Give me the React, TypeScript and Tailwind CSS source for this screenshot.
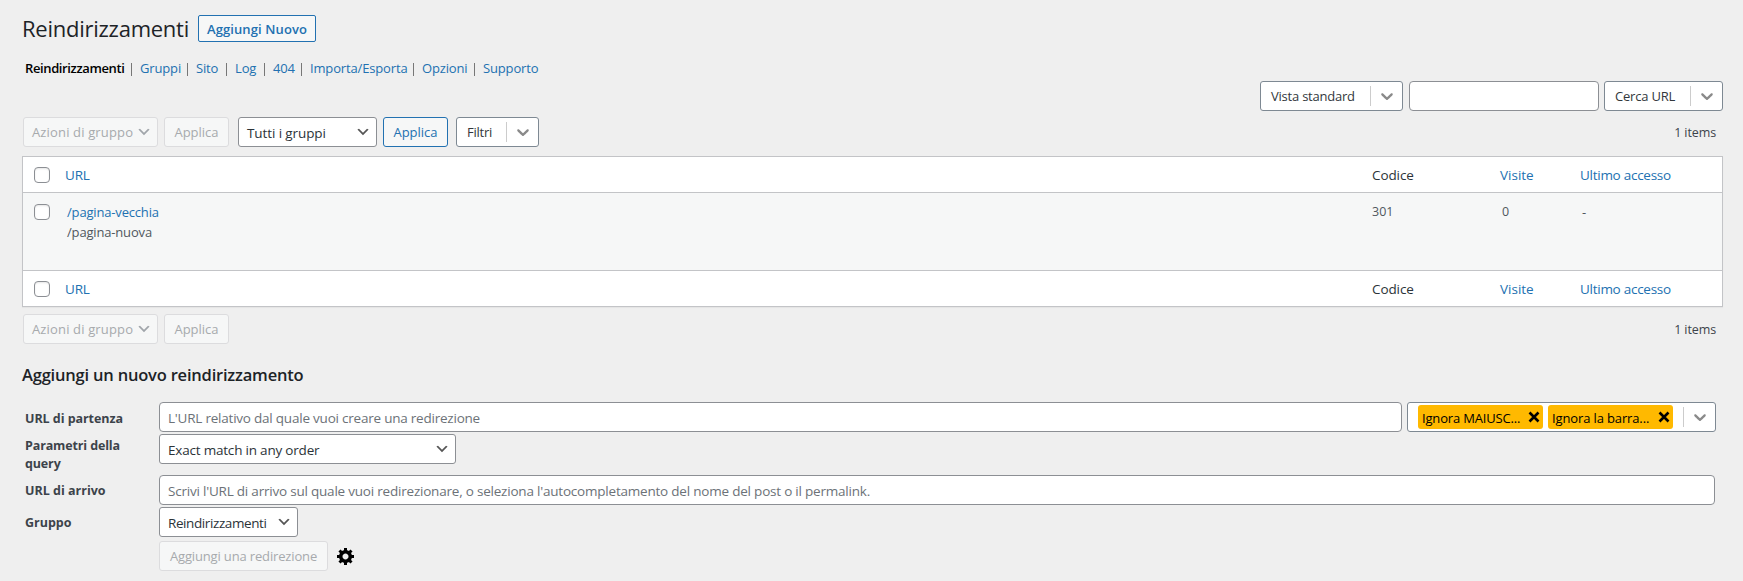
import React from 'react';
import clsx from 'clsx';

const NAV = [
    { label: 'Gruppi', className: 'w-[47px]' },
    { label: 'Sito', className: 'w-[30px]' },
    { label: 'Log', className: 'w-[29px]' },
    { label: '404', className: 'w-[28px]' },
    { label: 'Importa/Esporta', className: 'w-[103px]' },
    { label: 'Opzioni', className: 'w-[52px]' },
    { label: 'Supporto', className: '' },
];

const Chevron: React.FC<{ className?: string }> = ({ className }) => (
    <svg viewBox="0 0 20 20" className={clsx('h-4 w-4 shrink-0', className)} fill="currentColor">
        <path d="M5 6l5 5 5-5 2 1-7 7-7-7 2-1z" />
    </svg>
);

// Native looking select
const Select: React.FC<{ label: string; className: string; textClass?: string; disabled?: boolean }> = ({ label, className, textClass, disabled }) => (
    <button
        className={clsx(
            'flex h-[30px] items-center justify-between rounded-[3px] border pl-2 pr-[5px]',
            disabled ? 'border-[#dcdcde] bg-[#f6f7f7] text-[#a7aaad]' : 'border-[#8c8f94] bg-white text-[#2c3338]',
            className
        )}
    >
        <span className={clsx('whitespace-nowrap pt-[2px]', textClass)}>{label}</span>
        <Chevron className={disabled ? 'text-[#a0a5aa]' : 'text-[#555]'} />
    </button>
);

const Indicator = () => (
    <span className="flex h-full items-center">
        <span className="h-5 w-px bg-[#ccc]" />
        <span className="flex w-[31px] justify-center text-[#8a8a8a]">
            <svg viewBox="0 0 20 20" className="h-5 w-5" fill="currentColor">
                <path d="M4.516 7.548c0.436-0.446 1.043-0.481 1.576 0l3.908 3.747 3.908-3.747c0.533-0.481 1.141-0.446 1.574 0 0.436 0.445 0.408 1.197 0 1.615-0.406 0.418-4.695 4.502-4.695 4.502-0.217 0.223-0.502 0.335-0.787 0.335s-0.57-0.112-0.789-0.335c0 0-4.287-4.084-4.695-4.502s-0.436-1.17 0-1.615z" />
            </svg>
        </span>
    </span>
);

const DropButton: React.FC<{ label: string; className: string; textClass?: string }> = ({ label, className, textClass }) => (
    <button className={clsx('flex h-[30px] items-center justify-between rounded-[3px] border border-[#7e8993] bg-white pl-[10px] text-[13px] text-[#32373c]', className)}>
        <span className={clsx('whitespace-nowrap pt-[2px]', textClass)}>{label}</span>
        <Indicator />
    </button>
);

const Apply: React.FC<{ className: string }> = ({ className }) => (
    <button className={clsx('h-[30px] w-[65px] rounded-[3px] border bg-[#f6f7f7] pt-[2px] text-center text-[13px]', className)}>Applica</button>
);

const BulkActions = () => (
    <>
        <Select label="Azioni di gruppo" disabled className="ml-px w-[135px] text-[13px]" textClass="tracking-[0.15px]" />
        <Apply className="ml-[6px] border-[#dcdcde] text-[#a7aaad]" />
    </>
);

const Count = () => <span className="ml-auto mr-[7px] pt-[3px] text-[12.5px] tracking-[-0.1px] text-[#3c434a]">1 items</span>;

const Checkbox = () => <span className="block h-4 w-4 rounded-[4px] border border-[#8c8f94] bg-white shadow-[inset_0_1px_2px_rgba(0,0,0,0.1)]" />;

const COLS = 'grid grid-cols-[42px_1307px_128px_80px_1fr]';

const HeaderRow = () => (
    <div className={clsx(COLS, 'h-[35px] items-center bg-white text-[13.5px] text-[#2271b1]')}>
        <div className="pl-[11px] pt-px"><Checkbox /></div>
        <div className="pt-[2px] tracking-[-0.2px]">URL</div>
        <div className="pt-[2px] tracking-[-0.1px] text-[#2c3338]">Codice</div>
        <div className="pt-[2px]">Visite</div>
        <div className="pt-[2px] tracking-[-0.27px]">Ultimo accesso</div>
    </div>
);

const Label: React.FC<{ children: React.ReactNode; className?: string }> = ({ children, className }) => (
    <div className={clsx('w-[137px] shrink-0 pl-[3px] pr-6 text-[12.5px] font-bold leading-[18px] text-[#3c434a]', className)}>{children}</div>
);

const Tag: React.FC<{ label: string; className: string }> = ({ label, className }) => (
    <span className="flex h-6 w-[125px] items-center justify-between rounded-[3px] bg-[#ffb900] pl-[4px] pr-[3px] text-black">
        <span className={clsx('whitespace-nowrap pt-[3px] text-[13px]', className)}>{label}</span>
        <svg viewBox="0 0 12 12" className="h-3 w-3" stroke="currentColor" strokeWidth="2.6">
            <path d="M1.5 1.5l9 9M10.5 1.5l-9 9" />
        </svg>
    </span>
);

const App: React.FC = () => {
    return (
        <div className="h-[581px] w-[1743px] overflow-hidden bg-[#efefef] pl-[22px] pr-[20px] pt-[15px] font-['Open_Sans','Noto_Sans',sans-serif] text-[#3c434a]">
            <div className="flex h-[27px] items-center">
                <h1 className="w-[176px] whitespace-nowrap text-[22px] leading-[27px] tracking-[-0.25px] text-[#1d2327]">Reindirizzamenti</h1>
                <a className="h-[27px] w-[118px] rounded-[2px] border border-[#2271b1] bg-[#f6f7f7] pt-px text-center text-[13px] font-semibold leading-[25px] tracking-[0.1px] text-[#2271b1]">
                    Aggiungi Nuovo
                </a>
            </div>

            <nav className="mt-[17px] flex h-[20px] items-center pl-[2px] text-[13px] tracking-[-0.15px] text-[#2271b1]">
                <a className="w-[107px] whitespace-nowrap pl-px font-semibold tracking-[-0.38px] text-black">Reindirizzamenti</a>
                {NAV.map(item => (
                    <React.Fragment key={item.label}>
                        <span className="mr-[8px] h-[13px] w-px shrink-0 bg-[#777]" />
                        <a className={clsx('shrink-0 whitespace-nowrap', item.className)}>{item.label}</a>
                    </React.Fragment>
                ))}
            </nav>

            <div className="mt-[2px] flex justify-end">
                <DropButton label="Vista standard" className="w-[143px]" textClass="tracking-[-0.22px]" />
                <input className="ml-[6px] h-[30px] w-[190px] rounded-[4px] border border-[#8c8f94] bg-white" />
                <DropButton label="Cerca URL" className="ml-[5px] w-[119px]" textClass="tracking-[-0.2px]" />
            </div>

            <div className="mt-[6px] flex h-[30px] items-center">
                <BulkActions />
                <Select label="Tutti i gruppi" className="ml-[9px] w-[139px] text-[13.5px]" textClass="tracking-[-0.1px]" />
                <Apply className="ml-[6px] border-[#2271b1] text-[#2271b1]" />
                <DropButton label="Filtri" className="ml-[8px] w-[83px]" textClass="tracking-[-0.25px]" />
                <Count />
            </div>

            <div className="mt-[9px] w-[1701px] border border-[#c3c4c7] shadow-[0_1px_1px_rgba(0,0,0,0.04)]">
                <HeaderRow />
                <div className={clsx(COLS, 'h-[79px] border-y border-[#c3c4c7] bg-[#f6f7f7] pt-[9px] text-[13px] leading-[20px] text-[#50575e]')}>
                    <div className="pl-[11px] pt-[2px]"><Checkbox /></div>
                    <div className="pl-[2px] tracking-[-0.17px]">
                        <div className="text-[#2271b1]">/pagina-vecchia</div>
                        <div>/pagina-nuova</div>
                    </div>
                    <div className="text-[12.5px]">301</div>
                    <div className="pl-[2px] text-[12.5px]">0</div>
                    <div className="pl-[2px]">-</div>
                </div>
                <HeaderRow />
            </div>

            <div className="mt-[7px] flex h-[30px] items-center">
                <BulkActions />
                <Count />
            </div>

            <h2 className="mt-[19px] h-[24px] text-[16.5px] font-semibold leading-[24px] tracking-[-0.2px] text-[#1d2327]">Aggiungi un nuovo reindirizzamento</h2>

            <form className="mt-[15px] flex flex-col gap-[2px]">
                <div className="flex h-[30px] items-center">
                    <Label className="pt-[3px] tracking-[-0.05px]">URL di partenza</Label>
                    <input
                        className="h-[30px] w-[1243px] rounded-[4px] border border-[#8c8f94] bg-white px-2 pt-[2px] text-[13.5px] tracking-[-0.22px] placeholder:text-[#6c7278]"
                        placeholder="L'URL relativo dal quale vuoi creare una redirezione"
                    />
                    <div className="ml-[5px] flex h-[30px] w-[309px] items-center rounded-[3px] border border-[#7e8993] bg-white pl-[10px]">
                        <Tag label="Ignora MAIUSC..." className="tracking-[-0.17px]" />
                        <span className="w-[5px]" />
                        <Tag label="Ignora la barra..." className="tracking-[-0.13px]" />
                        <span className="ml-auto h-full"><Indicator /></span>
                    </div>
                </div>
                <div className="flex h-[39px]">
                    <Label className="pt-[3px] tracking-[-0.13px]">Parametri della query</Label>
                    <Select label="Exact match in any order" className="w-[297px] text-[13.5px]" textClass="tracking-[-0.2px]" />
                </div>
                <div className="flex h-[30px] items-center">
                    <Label className="pt-[2px]">URL di arrivo</Label>
                    <input
                        className="h-[30px] w-[1556px] rounded-[4px] border border-[#8c8f94] bg-white px-2 pt-px text-[13.5px] tracking-[-0.21px] placeholder:text-[#6c7278]"
                        placeholder="Scrivi l'URL di arrivo sul quale vuoi redirezionare, o seleziona l'autocompletamento del nome del post o il permalink."
                    />
                </div>
                <div className="flex h-[30px] items-center">
                    <Label className="pt-[2px]">Gruppo</Label>
                    <Select label="Reindirizzamenti" className="w-[139px] text-[13.5px]" textClass="tracking-[-0.4px]" />
                </div>
                <div className="mt-[2px] flex h-[30px] items-center pl-[137px]">
                    <button className="h-[30px] w-[169px] rounded-[3px] border border-[#dcdcde] bg-[#f6f7f7] pt-[2px] text-[13px] tracking-[-0.15px] text-[#a7aaad]">
                        Aggiungi una redirezione
                    </button>
                    {/* dashicons-admin-generic */}
                    <svg viewBox="0 0 20 20" className="ml-[8px] h-5 w-5 text-black" fill="currentColor">
                        <path d="M18 12h-2.18c-.17.7-.44 1.35-.81 1.93l1.54 1.54-2.1 2.1-1.54-1.54c-.58.36-1.23.63-1.91.79V19H8v-2.18c-.68-.16-1.33-.43-1.91-.79l-1.54 1.54-2.12-2.12 1.54-1.54c-.36-.58-.63-1.23-.79-1.91H1V9.03h2.17c.16-.7.44-1.35.8-1.94L2.43 5.55l2.1-2.1 1.54 1.54c.58-.37 1.24-.64 1.93-.81V2h3v2.18c.68.16 1.33.43 1.91.79l1.54-1.54 2.12 2.12-1.54 1.54c.36.59.64 1.24.8 1.94H18V12zm-8.5 1.5c1.66 0 3-1.34 3-3s-1.34-3-3-3-3 1.34-3 3 1.34 3 3 3z" />
                    </svg>
                </div>
            </form>
        </div>
    );
};

export default App;
